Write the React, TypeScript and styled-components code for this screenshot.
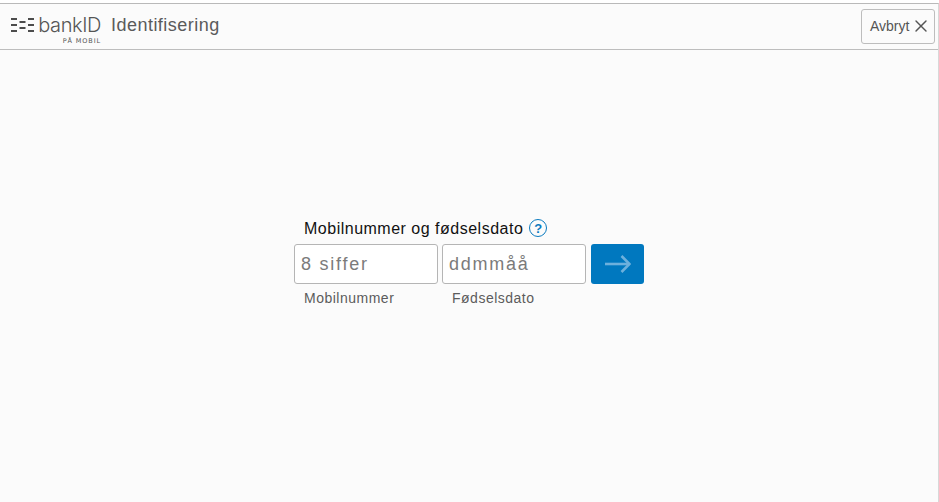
import React from 'react';
import styled, { createGlobalStyle } from 'styled-components';
import { X } from 'lucide-react';

const GlobalStyle = createGlobalStyle`
  html, body {
    margin: 0;
    padding: 0;
    height: 100%;
    background: #fff;
  }
  * {
    box-sizing: border-box;
  }
`;

const Page = styled.div`
  width: 939px;
  height: 502px;
  padding-top: 3px;
  display: flex;
  flex-direction: column;
  overflow: hidden;
  font-family: 'Liberation Sans', Arial, sans-serif;
  background: #fff;
`;

const Frame = styled.div`
  flex: 1;
  display: flex;
  flex-direction: column;
  background: #fbfbfb;
  border-top: 1px solid #b9b9b9;
  border-right: 1px solid #d8d8d8;
`;

const Header = styled.header`
  height: 46px;
  flex-shrink: 0;
  display: flex;
  align-items: center;
  justify-content: space-between;
  padding: 0 3px 1px 11px;
  border-bottom: 1px solid #bdbdbd;
`;

const Brand = styled.div`
  display: flex;
  align-items: center;
  gap: 10px;
`;

const Logo = styled.div`
  width: 90px;
  display: flex;
  flex-direction: column;
  align-items: flex-end;
  gap: 4px;
  margin-top: 9px;
`;

const LogoRow = styled.div`
  width: 100%;
  height: 16px;
  display: flex;
  align-items: center;
  justify-content: space-between;
`;

const WordMark = styled.span`
  font-family: Inter, sans-serif;
  font-weight: 300;
  font-size: 20px;
  line-height: 16px;
  letter-spacing: -0.4px;
  color: #555;
`;

const SubMark = styled.span`
  font-family: 'DejaVu Sans', sans-serif;
  font-size: 6.5px;
  line-height: 8px;
  letter-spacing: 0.9px;
  color: #555;
`;

const Title = styled.h1`
  margin: 0 0 2px;
  font-size: 18px;
  font-weight: 400;
  letter-spacing: 0.47px;
  color: #5a5a5a;
`;

const CancelButton = styled.button`
  width: 74px;
  height: 35px;
  padding: 0 3px 0 8px;
  display: flex;
  align-items: center;
  justify-content: space-between;
  font-family: inherit;
  font-size: 14px;
  color: #555;
  background: #fbfbfb;
  border: 1px solid #bdbdbd;
  border-radius: 3px;
`;

const Main = styled.main`
  flex: 1;
  padding: 168px 0 0 294px;
`;

const Form = styled.form`
  width: 350px;
  display: flex;
  flex-direction: column;
`;

const Legend = styled.div`
  display: flex;
  align-items: center;
  gap: 6px;
  height: 20px;
  padding-left: 10px;
  font-size: 16px;
  line-height: 22px;
  letter-spacing: 0.5px;
  color: #111;
`;

const LegendText = styled.span`
  padding-top: 2px;
`;

const HelpBadge = styled.span`
  width: 18px;
  height: 18px;
  display: flex;
  align-items: center;
  justify-content: center;
  border: 1.5px solid #0a7abf;
  border-radius: 50%;
  font-size: 13px;
  line-height: 15px;
  font-weight: 700;
  letter-spacing: 0;
  color: #0a7abf;
`;

const Fields = styled.div`
  display: flex;
  margin-top: 6px;
`;

const Field = styled.div`
  width: 148px;
  display: flex;
  flex-direction: column;
`;

const Input = styled.input`
  width: 144px;
  height: 40px;
  padding: 0 6px;
  font-family: inherit;
  font-size: 18px;
  letter-spacing: 1.75px;
  background: #fff;
  border: 1px solid #b5b5b5;
  border-radius: 3px;

  &::placeholder {
    color: #7b7b7b;
    opacity: 1;
  }
`;

const Caption = styled.label`
  margin-top: 6px;
  padding-left: 10px;
  font-size: 14px;
  line-height: 16px;
  letter-spacing: 0.5px;
  color: #5c5c5c;
`;

const Submit = styled.button`
  width: 53px;
  height: 40px;
  margin-left: 1px;
  padding: 0;
  display: flex;
  align-items: center;
  justify-content: center;
  background: #0078bf;
  border: none;
  border-radius: 3px;
`;

const BankIdBars = () => (
  <svg width="23" height="14" viewBox="0 0 23 14" fill="#4c4c4c" aria-hidden="true">
    <rect x="0" y="0" width="6" height="2" />
    <rect x="0" y="6" width="6" height="2" />
    <rect x="0" y="12" width="6" height="2" />
    <rect x="8.5" y="3" width="6" height="2" />
    <rect x="8.5" y="9" width="6" height="2" />
    <rect x="17" y="0" width="6" height="2" />
    <rect x="17" y="6" width="6" height="2" />
    <rect x="17" y="12" width="6" height="2" />
  </svg>
);

const SubmitArrow = () => (
  <svg width="26" height="18" viewBox="0 0 26 18" fill="none" stroke="#6db0dc" strokeWidth="2.6" aria-hidden="true">
    <path d="M0 9H24.5" />
    <path d="M16.5 1L24.5 9L16.5 17" />
  </svg>
);

const App = () => {
  return (
    <Page>
      <GlobalStyle />
      <Frame>
        <Header>
          <Brand>
            <Logo>
              <LogoRow>
                <BankIdBars />
                <WordMark>bankID</WordMark>
              </LogoRow>
              <SubMark>PÅ MOBIL</SubMark>
            </Logo>
            <Title>Identifisering</Title>
          </Brand>
          <CancelButton type="button">
            Avbryt
            <X size={20} strokeWidth={1.7} color="#555" />
          </CancelButton>
        </Header>
        <Main>
          <Form>
            <Legend>
              <LegendText>Mobilnummer og fødselsdato</LegendText>
              <HelpBadge>?</HelpBadge>
            </Legend>
            <Fields>
              <Field>
                <Input placeholder="8 siffer" />
                <Caption>Mobilnummer</Caption>
              </Field>
              <Field>
                <Input placeholder="ddmmåå" />
                <Caption>Fødselsdato</Caption>
              </Field>
              <Submit type="button">
                <SubmitArrow />
              </Submit>
            </Fields>
          </Form>
        </Main>
      </Frame>
    </Page>
  );
};

export default App;
